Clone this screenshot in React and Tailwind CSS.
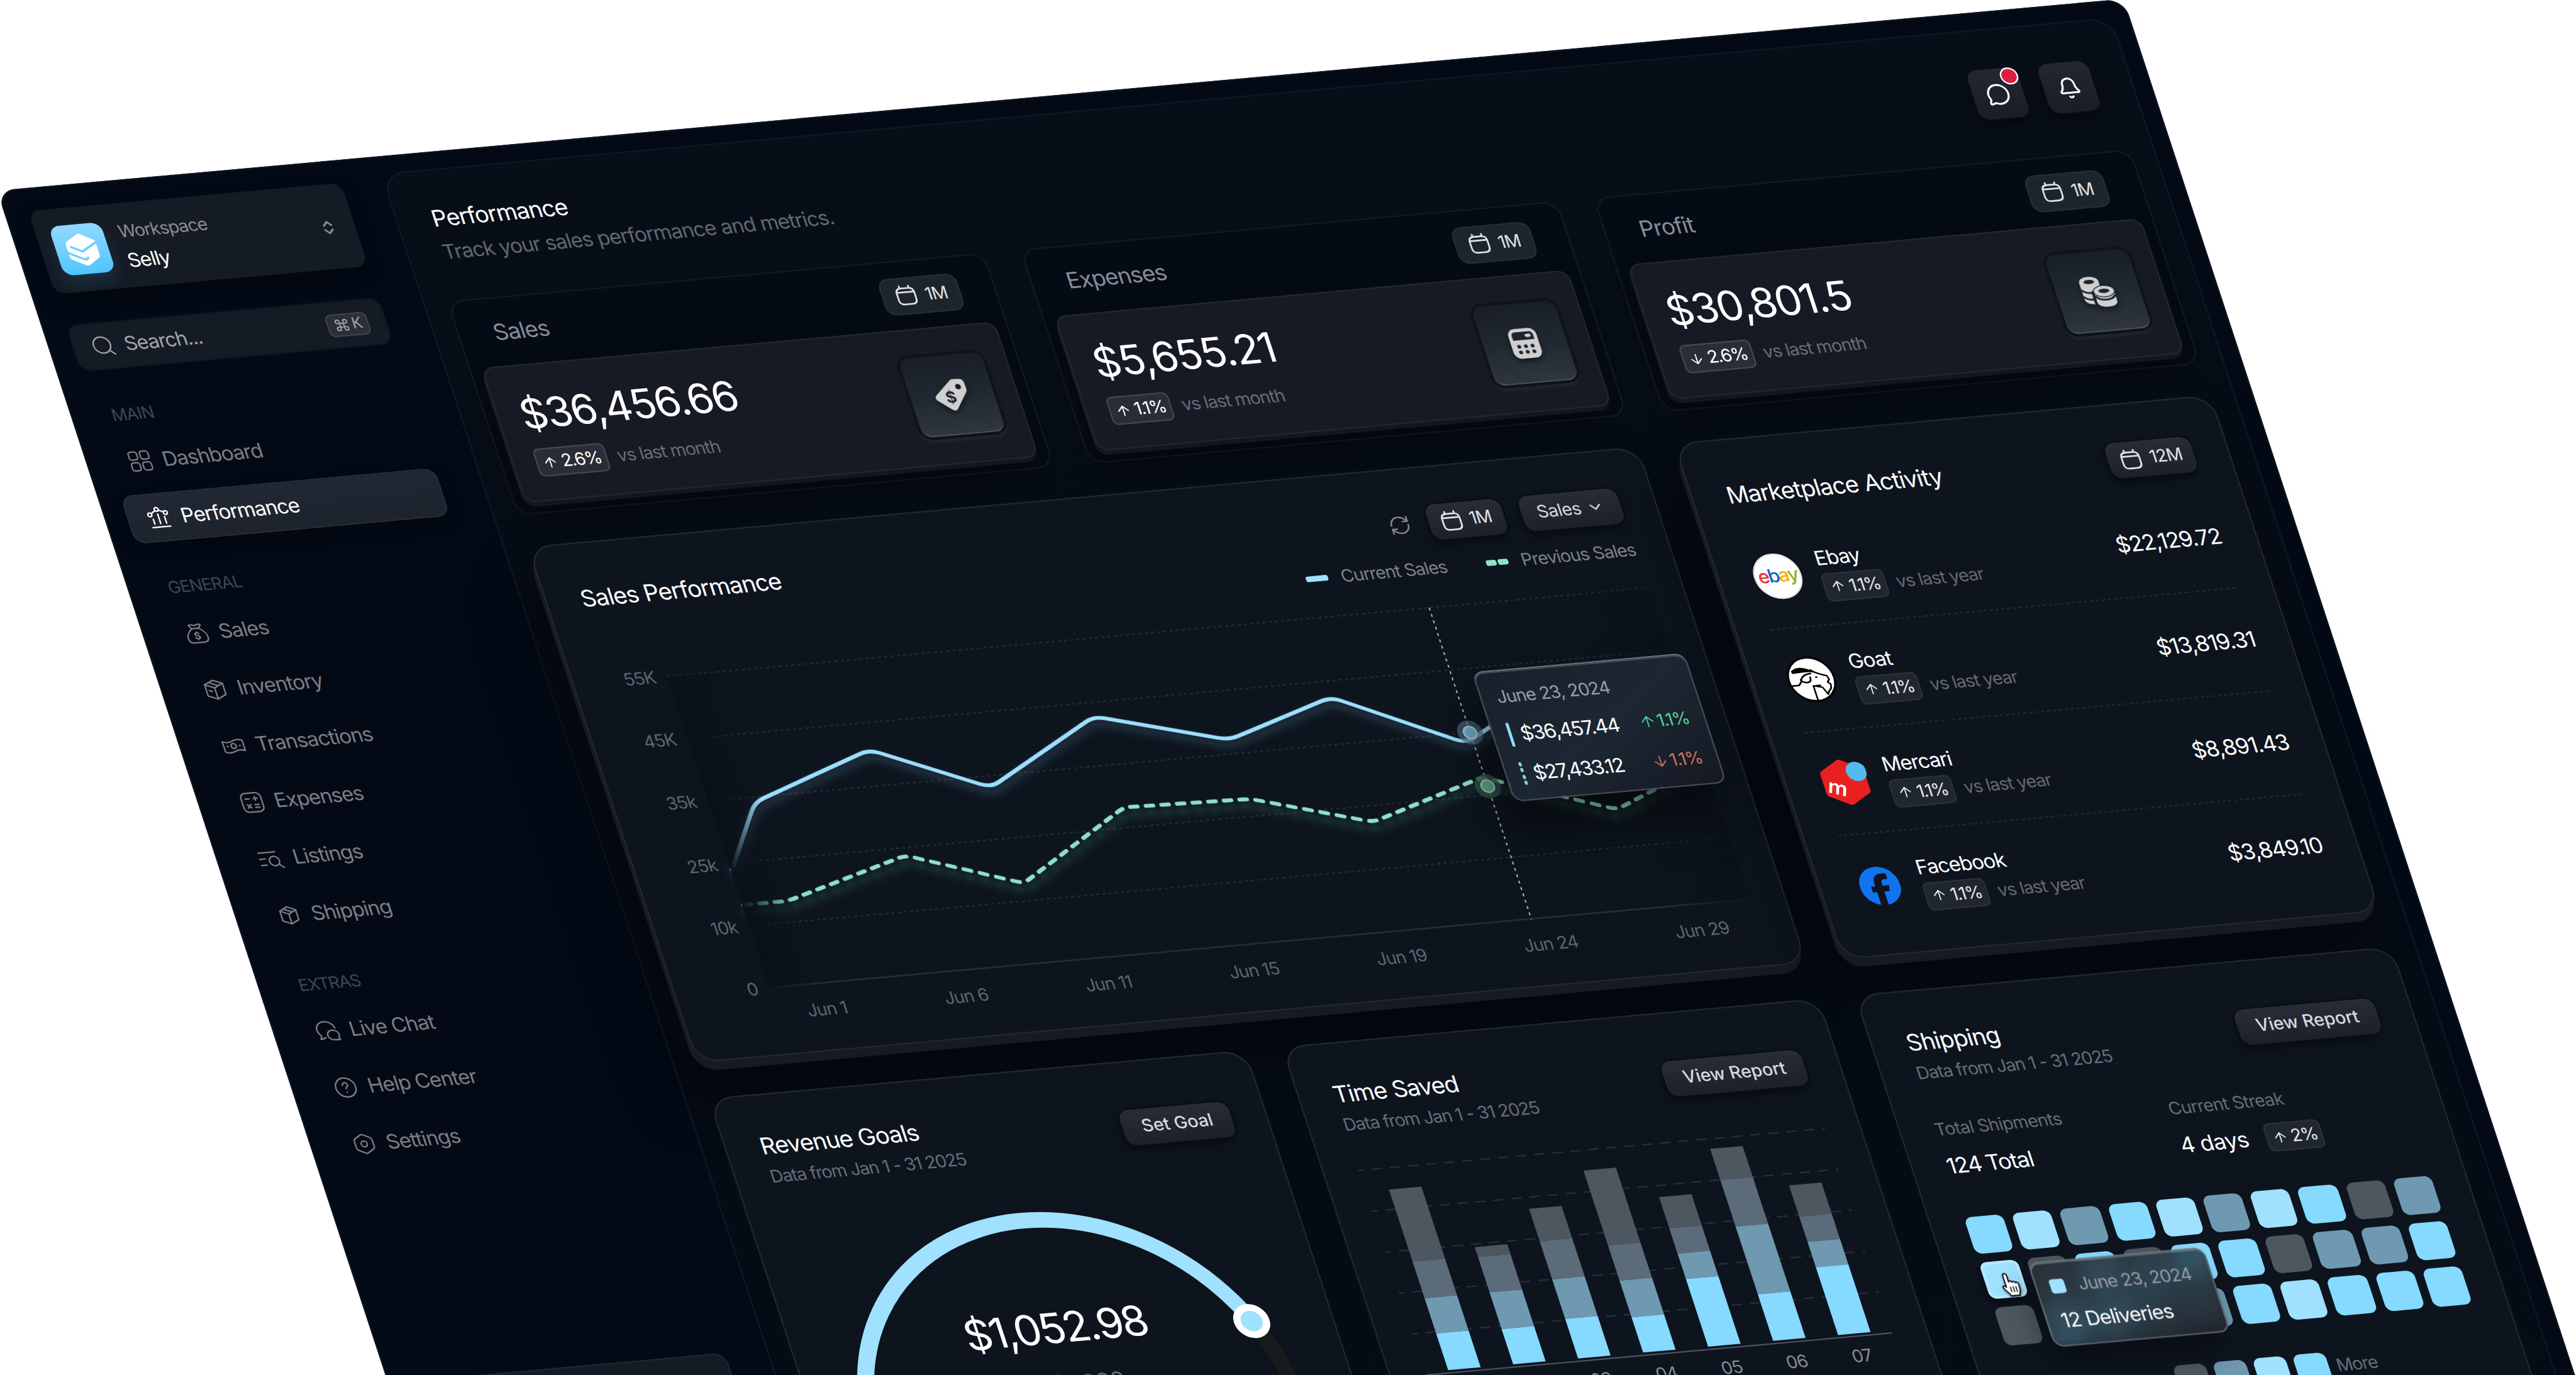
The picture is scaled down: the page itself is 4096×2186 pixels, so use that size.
import {
  ArrowDown,
  ArrowUp,
  Bell,
  ChevronDown,
  ChevronsUpDown,
  Command,
  MessageCircle,
  RefreshCw,
  Search,
} from "lucide-react";
import { FaFacebook } from "react-icons/fa6";

/* ---------- icons ---------- */

function Line({ children, className = "size-4", strokeWidth = 1.5 }) {
  return (
    <svg
      viewBox="0 0 24 24"
      fill="none"
      stroke="currentColor"
      strokeWidth={strokeWidth}
      strokeLinecap="round"
      strokeLinejoin="round"
      className={className}
    >
      {children}
    </svg>
  );
}

const DashboardIcon = () => (
  <Line>
    <rect x="2" y="2" width="8.5" height="8.5" rx="2.5" />
    <rect x="13.5" y="2" width="8.5" height="8.5" rx="2.5" />
    <rect x="2" y="13.5" width="8.5" height="8.5" rx="2.5" />
    <rect x="13.5" y="13.5" width="8.5" height="8.5" rx="2.5" />
  </Line>
);

const PerformanceIcon = () => (
  <Line>
    <path d="M3 22h18M6 18.5v-5M12 18.5v-10M18 18.5v-7" />
    <circle cx="4" cy="8.5" r="2" />
    <circle cx="12" cy="3.5" r="2" />
    <circle cx="20" cy="7.5" r="2" />
    <path d="m5.7 7.4 4.6-2.8M13.9 4.5l4.2 2" />
  </Line>
);

const MoneyBagIcon = () => (
  <Line>
    <path d="M8.5 7C5 9.5 2 13.5 2 17c0 3.5 2 5 5.5 5h9c3.5 0 5.5-1.5 5.5-5 0-3.5-3-7.5-6.5-10Z" />
    <path d="M8.5 7 6 3.5c1.5-1 2.7-.9 4-.2 1.3.6 2.7.6 4 0 1.3-.7 2.5-.8 4 .2L15.5 7" />
    <path d="M14 12.8c-.4-.8-1.1-1.1-2-1.1-1.2 0-2 .6-2 1.5 0 2 4.2 1 4.2 3.1 0 1-.9 1.6-2.2 1.6-1 0-1.900-.4-2.200-1.300M12 10.800v.9M12 17.900v.9" />
  </Line>
);

const InventoryIcon = () => (
  <Line>
    <path d="M12 2.2 3 6v12l9 4 9-4V6l-9-3.800Z" />
    <path d="m3 6 9 4.200L21 6M12 10.200V22M7.500 4.200l9 4.100M6 12.500l2.500 1.200" />
  </Line>
);

const TransactionsIcon = () => (
  <Line>
    <path d="M2 6.500c3.300 1.700 6.700 1.700 10 .2 3.300-1.600 6.700-1.600 10 0v11c-3.300-1.600-6.700-1.600-10 0-3.300 1.500-6.700 1.500-10-.2v-11Z" />
    <circle cx="12" cy="12" r="2.6" />
    <path d="M5.500 12h.8M17.700 12h.8" />
  </Line>
);

const ExpensesIcon = () => (
  <Line>
    <rect x="2" y="2" width="20" height="20" rx="5" />
    <path d="M6 8h4M14 8h4M16 6v4M6.500 14l3.500 3.500M10 14l-3.500 3.500M14 14.500h4M14 17.500h4" />
  </Line>
);

const ListingsIcon = () => (
  <Line>
    <path d="M1 5h17M1 11.500h5.500M1 18h5.500" />
    <circle cx="15" cy="14.5" r="5" />
    <path d="m18.700 18.200 4 3.800" />
  </Line>
);

const ShippingIcon = () => (
  <Line>
    <path d="M12 3 4 6.800v10.400L12 21l8-3.800V6.800L12 3Z" />
    <path d="m4 6.800 8 3.900 8-3.900M12 10.700V21M8 5l8 3.800" />
  </Line>
);

const LiveChatIcon = () => (
  <Line>
    <path d="M20.500 9.500C19.800 5.300 16 2 11 2 5.800 2 2 5.700 2 10.200c0 2.300 1 4.300 2.500 5.800.3 1.400-.2 2.800-1.300 4 2 .2 3.800-.3 5.300-1.300" />
    <path d="M16.500 11.500c-3 0-5.300 2.200-5.300 5s2.300 5 5.300 5c2 .3 4 .5 6 .3-.8-.8-1-1.600-.8-2.400.6-.8 1-1.800 1-2.900 0-2.800-2.800-5-6.200-5Z" />
  </Line>
);

const HelpIcon = () => (
  <Line>
    <circle cx="12" cy="12" r="10" />
    <path d="M9.500 9.500C9.500 8 10.600 7 12 7s2.500 1 2.500 2.300c0 2-2.500 2-2.500 4.200M12 16.800v.1" />
  </Line>
);

const SettingsIcon = () => (
  <Line>
    <path d="M10.500 2.500a3 3 0 0 1 3 0l6 3.400a3 3 0 0 1 1.500 2.600v7a3 3 0 0 1-1.500 2.600l-6 3.400a3 3 0 0 1-3 0l-6-3.400A3 3 0 0 1 3 15.500v-7a3 3 0 0 1 1.500-2.600Z" />
    <circle cx="12" cy="12" r="3" />
  </Line>
);

const CalendarIcon = () => (
  <Line className="size-[15px]" strokeWidth={1.9}>
    <path d="M2.500 9.500c0-4 2-5.500 5.500-5.500h8c3.500 0 5.500 1.500 5.500 5.500v7c0 4-2 5.500-5.500 5.500H8c-3.500 0-5.500-1.500-5.500-5.500v-7ZM7 4V1.500M17 4V1.500M2.800 8.500h18.400" />
  </Line>
);

const TagIcon = () => (
  <svg viewBox="0 0 24 24" className="size-6 drop-shadow-[0_2px_2px_rgba(0,0,0,0.5)]">
    <path
      fill="#cfcfcf"
      fillRule="evenodd"
      d="M13 2.200c1-.9 1.800-1.100 3-1.100l3.800.2c1.600.1 2.700 1.200 2.800 2.700l.2 4.200c0 1.300-.2 2-1.100 3l-8.500 10.500c-1.200 1.400-2.700 1.500-4 .3l-7.400-6.600c-1.400-1.300-1.400-2.700-.2-4L13 2.200Zm4.800 6.300a1.900 1.900 0 1 0 0-3.800 1.900 1.900 0 0 0 0 3.800Z"
    />
    <text x="10.8" y="17.5" textAnchor="middle" fill="#1d242d" fontSize="11" fontWeight="700">
      $
    </text>
  </svg>
);

const CalculatorIcon = () => (
  <svg viewBox="0 0 24 24" className="size-6 drop-shadow-[0_2px_2px_rgba(0,0,0,0.5)]">
    <rect x="2.5" y="1.5" width="19" height="21" rx="5" fill="#cfcfcf" />
    <path d="M4.800 9.500V6.600c0-2 1-2.800 2.800-2.800h8.800c1.800 0 2.800.8 2.800 2.800v2.900Z" fill="#1d242d" />
    <rect x="13.5" y="5.5" width="4" height="2.2" rx="1" fill="#cfcfcf" />
    <g fill="#1d242d">
      <circle cx="7.5" cy="14" r="1.3" />
      <circle cx="12" cy="14" r="1.3" />
      <circle cx="16.5" cy="14" r="1.3" />
      <circle cx="7.5" cy="18" r="1.3" />
      <circle cx="12" cy="18" r="1.3" />
      <circle cx="16.5" cy="18" r="1.3" />
    </g>
  </svg>
);

const CoinsIcon = () => (
  <svg viewBox="0 0 24 24" className="size-6 drop-shadow-[0_2px_2px_rgba(0,0,0,0.5)]">
    <g fill="#cfcfcf">
      <path d="M1.500 5v11.500c0 2.200 2.300 3.800 6 4V5Z" />
      <path d="M1.500 5v3.500c0 1.800 3 3 6.500 3s6.500-1.200 6.500-3V5Z" />
      <ellipse cx="8" cy="4.8" rx="6.5" ry="3.6" />
    </g>
    <g fill="none" stroke="#1d242d" strokeWidth="1.3">
      <path d="M1.500 10c1 1.800 3.500 2.600 6.500 2.600M1.500 14.600c1 1.800 3.500 2.600 6.500 2.600" />
      <path d="M8.600 11.200V22" />
    </g>
    <ellipse cx="8" cy="4.8" rx="3.6" ry="1.5" fill="#1d242d" />
    <path d="M9.300 12v7.500c0 2 2.800 3.500 6.700 3.500s6.700-1.500 6.700-3.500V12Z" fill="#cfcfcf" />
    <ellipse cx="16" cy="12" rx="7.3" ry="4.3" fill="#1d242d" />
    <ellipse cx="16" cy="12" rx="6.7" ry="3.7" fill="#cfcfcf" />
    <ellipse cx="16" cy="11.8" rx="3.7" ry="1.5" fill="#1d242d" />
    <path d="M9.300 15c1.200 2 3.700 3 6.700 3s5.500-1 6.700-3" fill="none" stroke="#1d242d" strokeWidth="1.3" />
  </svg>
);

const SellyLogo = () => (
  <svg viewBox="0 0 22 24" className="h-[24px] w-[22px]">
    <path
      d="M10 1Q11 .3 12 1l8 4.800q.8.500.8 1.500v9.500q0 1-.8 1.500l-8 4.800q-1 .5-2 0l-8.300-4.900q-1-.6-1-1.800V7q0-.9.900-1.500Z"
      fill="#fff"
    />
    <path
      d="M22 7 10.300 13.200 3.600 9.400M-1 11.800l2 1.900 8.800 4.900q1.700.8 2.900-.9"
      fill="none"
      stroke="#6dcdff"
      strokeWidth="1.5"
      strokeLinejoin="round"
      strokeLinecap="round"
    />
  </svg>
);

const EbayLogo = () => (
  <div className="flex size-8 items-center justify-center rounded-full border border-[#dfe1e6] bg-white text-[13px] font-medium tracking-[-0.08em]">
    <span className="text-[#e53238]">e</span>
    <span className="text-[#0064d2]">b</span>
    <span className="text-[#f5af02]">a</span>
    <span className="text-[#86b817]">y</span>
  </div>
);

const GoatLogo = () => (
  <svg viewBox="0 0 32 32" className="size-8">
    <circle cx="16" cy="16" r="15.3" fill="#fff" stroke="#000" strokeWidth="1.4" />
    <path d="M4 9.500C8 5.800 15 7 19.500 11.800 15 10 9.500 11.300 4.500 11.200Z" fill="#000" />
    <g fill="none" stroke="#000" strokeWidth="1.1" strokeLinejoin="round" strokeLinecap="round">
      <path d="M17 9.500c3 2.700 6.500 4 9.800 5l.8 2.500-1.600 2 1.600 1.500-.5 2.700-2 2-1.300 2-2.300-5-5.300-1.500" />
      <path d="M16.500 12c-3 0-6 1.300-7.800 4 1.200 2 4.300 2.500 5.800 1.500 1.200-.9.800-2.200 1-3" />
      <path d="M1 19.500h5.500L9 16.800M15.800 20.700V31M17.500 20.700h3" />
      <path d="M19.300 14.800h.6" />
    </g>
  </svg>
);

const MercariLogo = () => (
  <svg viewBox="0 0 32 34" className="h-[34px] w-8">
    <path
      d="M14.800 1.300q1.200-.6 2.400 0l12.600 6.900q1 .6 1 1.800v14q0 1.200-1 1.800l-12.600 6.900q-1.200.6-2.400 0L2.200 25.800q-1-.6-1-1.800V10q0-1.200 1-1.800Z"
      fill="#ea2020"
    />
    <circle cx="25.5" cy="10.2" r="6.8" fill="#52bbef" />
    <text x="9" y="25" textAnchor="middle" fill="#fff" fontSize="14" fontWeight="600" transform="rotate(20 9 22)">
      m
    </text>
  </svg>
);

const FacebookLogo = () => (
  <div className="flex size-8 items-center justify-center">
    <FaFacebook className="size-[27px] text-[#1273f0]" />
  </div>
);

/* ---------- shared bits ---------- */

function Badge({ children, down, muted }) {
  const Arrow = down ? ArrowDown : ArrowUp;
  return (
    <span
      className={
        muted
          ? "flex h-5 items-center gap-[2px] rounded-[4px] border border-[#2b3139] bg-[#20262f] px-[3px] text-[12px] tracking-[-0.065em] text-[#e4e5e8]"
          : "flex h-5 items-center gap-[2px] rounded-[4px] border border-[#434751] bg-[#2a2d38] px-[3px] text-[12px] tracking-[-0.06em] text-white"
      }
    >
      <Arrow className="size-[11px]" strokeWidth={1.8} />
      {children}
    </span>
  );
}

function DateButton({ children, flat }) {
  return (
    <button
      className={
        flat
          ? "flex h-[26px] items-center gap-[5px] rounded-[7px] border border-[#262d35] bg-[#1c242c] px-2 text-[12px] text-[#e0e1e4]"
          : "flex h-[25px] items-center gap-[5px] rounded-[7px] bg-linear-to-b from-[#272c37] to-[#1b202b] px-2 text-[12px] text-[#e0e1e4] shadow-[0_0_0_1px_#080d16,-1px_3px_5px_rgba(0,0,0,0.5)]"
      }
    >
      <CalendarIcon />
      {children}
    </button>
  );
}

function ActionButton({ children }) {
  return (
    <button className="flex h-[25px] items-center rounded-[7px] bg-linear-to-b from-[#272c37] to-[#1b202b] px-[13px] text-[12px] font-medium tracking-[-0.005em] text-[#d6d7dc] shadow-[0_0_0_1px_#080d16,-1px_3px_5px_rgba(0,0,0,0.5)]">
      {children}
    </button>
  );
}

function CardHeader({ title, action }) {
  return (
    <div className="flex h-11 items-center justify-between">
      <div>
        <h3 className="text-[16px] leading-6 text-white">{title}</h3>
        <p className="text-[12px] leading-5 tracking-[-0.045em] text-[#676c76]">Data from Jan 1 - 31 2025</p>
      </div>
      <ActionButton>{action}</ActionButton>
    </div>
  );
}

/* ---------- sidebar ---------- */

const navGroups = [
  {
    title: "MAIN",
    items: [
      { label: "Dashboard", icon: DashboardIcon },
      { label: "Performance", icon: PerformanceIcon, active: true },
    ],
  },
  {
    title: "GENERAL",
    items: [
      { label: "Sales", icon: MoneyBagIcon },
      { label: "Inventory", icon: InventoryIcon },
      { label: "Transactions", icon: TransactionsIcon },
      { label: "Expenses", icon: ExpensesIcon },
      { label: "Listings", icon: ListingsIcon },
      { label: "Shipping", icon: ShippingIcon },
    ],
  },
  {
    title: "EXTRAS",
    items: [
      { label: "Live Chat", icon: LiveChatIcon },
      { label: "Help Center", icon: HelpIcon },
      { label: "Settings", icon: SettingsIcon },
    ],
  },
];

function NavItem({ label, icon: Icon, active }) {
  return (
    <a
      className={
        active
          ? "-ml-px flex h-[34px] items-center gap-[7px] rounded-[8px] border border-[#282e38] bg-linear-to-b from-[#222833] to-[#1d232d] px-3 text-[13.9px] text-white shadow-[0_4px_10px_rgba(0,0,0,0.4)]"
          : "flex h-[34px] items-center gap-[7px] px-3 text-[13.9px] text-[#7d7d80]"
      }
    >
      <Icon />
      {label}
    </a>
  );
}

function Sidebar() {
  return (
    <aside className="flex w-[256px] shrink-0 flex-col pt-4 pr-7 pl-4">
      <div className="flex h-[59px] items-center gap-[10px] rounded-[8px] bg-[#151b25] pr-3 pl-[10px] shadow-[-2px_6px_12px_rgba(0,0,0,0.35)]">
        <div className="flex size-[35px] items-center justify-center rounded-[7px] bg-linear-to-b from-[#90d8ff] to-[#4ec5ff] shadow-[0_6px_10px_rgba(78,197,255,0.12)]">
          <SellyLogo />
        </div>
        <div className="flex-1">
          <div className="text-[12px] leading-5 text-[#8b8b8e]">Workspace</div>
          <div className="text-[13.5px] leading-5 text-white">Selly</div>
        </div>
        <ChevronsUpDown className="size-3 text-[#8a8f98]" strokeWidth={2.5} />
      </div>

      <div className="mt-[22px] flex h-[33px] items-center gap-[6px] rounded-[8px] border border-[#111721] bg-[#151b25] px-[11px] text-[13.5px] text-[#a0a4ac]">
        <Search className="size-[17px]" strokeWidth={1.4} />
        <span className="flex-1">Search...</span>
        <kbd className="flex h-4 items-center gap-[2px] rounded-[4px] border border-[#3d434d] bg-[#2a2f3a] px-1 font-sans text-[11px]">
          <Command className="size-[10px]" strokeWidth={2} />K
        </kbd>
      </div>

      <div className="mt-6 flex flex-col gap-6">
        {navGroups.map((group) => (
          <div key={group.title}>
            <div className="mb-2 pl-[11px] text-[11.5px] leading-4 text-[#40464f]">{group.title}</div>
            <nav className="flex flex-col gap-[6px]">
              {group.items.map((item) => (
                <NavItem key={item.label} {...item} />
              ))}
            </nav>
          </div>
        ))}
      </div>

      <div className="mt-[149px] h-[59px] rounded-[8px] border border-[#20262f] bg-[#151b25]" />
    </aside>
  );
}

/* ---------- stat cards ---------- */

const stats = [
  { label: "Sales", value: "$36,456.66", change: "2.6%", icon: TagIcon },
  { label: "Expenses", value: "$5,655.21", change: "1.1%", icon: CalculatorIcon },
  { label: "Profit", value: "$30,801.5", change: "2.6%", down: true, icon: CoinsIcon },
];

function StatCard({ label, value, change, down, icon: Icon }) {
  return (
    <section className="h-[152px] rounded-[11px] border border-[#131a24] bg-[#050b15] px-[7px]">
      <div className="flex h-[47px] items-center justify-between pr-4 pl-4">
        <span className="text-[15.5px] text-[#878c96]">{label}</span>
        <DateButton flat>1M</DateButton>
      </div>
      <div className="flex h-24 items-center justify-between rounded-[8px] border border-[#212732] bg-[#171a25] px-[15px] shadow-[-1px_3px_0_#11161f,-4px_10px_16px_rgba(0,0,0,0.35)]">
        <div>
          <div className="text-[28.5px] leading-9 tracking-[-0.035em] text-white">{value}</div>
          <div className="mt-[6px] flex items-center gap-[7px] text-[12px] text-[#676c76]">
            <Badge down={down}>{change}</Badge>
            vs last month
          </div>
        </div>
        <div className="flex size-14 items-center justify-center rounded-[7px] border-b border-[#4a5057] bg-linear-to-b from-[#191e27] via-[#1f2830] to-[#2f363d] shadow-[0_0_0_2px_#0f131b,0_3px_2px_1px_rgba(50,48,46,0.5)]">
          <Icon />
        </div>
      </div>
    </section>
  );
}

/* ---------- sales performance ---------- */

const currentSales = [
  [1, 137],
  [30.5, 92],
  [117, 63],
  [189, 96.5],
  [272, 54],
  [356, 78.5],
  [432, 55.5],
  [511, 95.5],
  [560, 71],
  [664, 92],
];

const previousSales = [
  [1, 162],
  [31, 162],
  [118, 138],
  [190, 164.5],
  [272, 118.5],
  [357, 120.5],
  [433, 144],
  [514, 120],
  [596, 150.5],
  [664, 124],
];

// polyline whose corners are softened by r
function softPath(points, r) {
  let d = `M${points[0][0]} ${points[0][1]}`;
  for (let i = 1; i < points.length - 1; i++) {
    const [px, py] = points[i - 1];
    const [x, y] = points[i];
    const [nx, ny] = points[i + 1];
    const a = Math.hypot(x - px, y - py);
    const b = Math.hypot(nx - x, ny - y);
    d += `L${x - ((x - px) / a) * r} ${y - ((y - py) / a) * r}`;
    d += `Q${x} ${y} ${x + ((nx - x) / b) * r} ${y + ((ny - y) / b) * r}`;
  }
  const last = points[points.length - 1];
  return `${d}L${last[0]} ${last[1]}`;
}

const yLabels = ["55K", "45K", "35k", "25k", "10k", "0"];
const xLabels = ["Jun 1", "Jun 6", "Jun 11", "Jun 15", "Jun 19", "Jun 24", "Jun 29"];

function ChartTooltip() {
  return (
    <div className="absolute top-[48px] left-[530px] h-[91px] w-36 rounded-[7px] border border-[#444a52] bg-linear-to-br from-[#17202a] via-[#1d2733] to-[#151923] px-[10px] pt-[7px] shadow-[0_-1px_0_#6b7178,-10px_20px_30px_rgba(0,0,0,0.5)]">
      <div className="text-[12px] leading-5 text-[#989da6]">June 23, 2024</div>
      <div className="mt-[6px] flex h-5 items-center">
        <span className="h-[17px] w-[2px] rounded-full bg-[#8fdcff]" />
        <span className="ml-[6px] flex-1 text-[13.5px] tracking-[-0.05em] text-white">$36,457.44</span>
        <span className="flex items-center text-[12px] tracking-[-0.05em] text-[#57cf9b]">
          <ArrowUp className="size-3" strokeWidth={1.6} />
          1.1%
        </span>
      </div>
      <div className="mt-2 flex h-5 items-center">
        <span className="flex h-[17px] w-[2px] flex-col justify-between">
          <i className="h-[3px] rounded-full bg-[#7fe0bf]" />
          <i className="h-[3px] rounded-full bg-[#7fe0bf]" />
          <i className="h-[3px] rounded-full bg-[#7fe0bf]" />
          <i className="h-[3px] rounded-full bg-[#7fe0bf]" />
        </span>
        <span className="ml-[6px] flex-1 text-[13.5px] tracking-[-0.055em] text-white">$27,433.12</span>
        <span className="flex items-center text-[12px] tracking-[-0.05em] text-[#cf6d62]">
          <ArrowDown className="size-3" strokeWidth={1.6} />
          1.1%
        </span>
      </div>
    </div>
  );
}

function SalesPerformance() {
  return (
    <section className="col-span-2 h-[366px] rounded-[16px] border border-[#212830] bg-[#0d141e] px-[23px] pt-[23px] shadow-[-2px_6px_0_#171a24,-14px_24px_40px_rgba(0,0,0,0.45)]">
      <div className="flex h-[30px] items-center justify-between">
        <h3 className="text-[16px] text-white">Sales Performance</h3>
        <div className="flex items-center gap-3">
          <RefreshCw className="size-[15px] text-[#85878c]" strokeWidth={1.7} />
          <DateButton>1M</DateButton>
          <button className="flex h-[25px] items-center gap-1 rounded-[7px] bg-linear-to-b from-[#272c37] to-[#1b202b] px-[11px] text-[12px] tracking-[-0.02em] text-[#d6d7dc] shadow-[0_0_0_1px_#080d16,-1px_3px_5px_rgba(0,0,0,0.5)]">
            Sales
            <ChevronDown className="size-3" strokeWidth={2} />
          </button>
        </div>
      </div>

      <div className="mt-[9px] flex h-4 items-center justify-end gap-[27px] text-[12px] tracking-[-0.035em] text-[#7f8186]">
        <span className="flex items-center gap-[9px]">
          <i className="h-[3.5px] w-[14.5px] rounded-[1.5px] bg-[#9fe0ff]" />
          Current Sales
        </span>
        <span className="flex items-center gap-[9px]">
          <span className="flex gap-[1.5px]">
            <i className="h-[3.5px] w-[6.5px] rounded-[1.5px] bg-[#8fe3c6]" />
            <i className="h-[3.5px] w-[6.5px] rounded-[1.5px] bg-[#8fe3c6]" />
          </span>
          Previous Sales
        </span>
      </div>

      <div className="mt-[13px] flex">
        <div className="flex h-[233px] w-8 flex-col justify-between text-right text-[12px] leading-3 text-[#5d636c]">
          {yLabels.map((label) => (
            <span key={label}>{label}</span>
          ))}
        </div>
        <div className="relative my-[6px] ml-2 h-[221px] w-[664px]">
          <svg viewBox="0 0 664 221" className="h-full w-full overflow-visible" fill="none">
            {[0, 44.2, 88.4, 132.6, 176.8].map((y) => (
              <path key={y} d={`M0 ${y}H664`} stroke="#252c35" strokeDasharray="2 2.2" />
            ))}
            <path d="M0 220.500H664" stroke="#252c35" strokeWidth="1.2" />
            <path d="M516 0V221" stroke="#aeb3b9" strokeWidth="0.9" strokeDasharray="2 2.5" />
            <path
              d={softPath(previousSales, 5)}
              stroke="#8fe0c5"
              strokeWidth="2.7"
              strokeDasharray="5 5.5"
              strokeLinecap="round"
              className="drop-shadow-[0_5px_3px_rgba(95,210,165,0.4)]"
            />
            <path
              d={softPath(currentSales, 7)}
              stroke="#9cdfff"
              strokeWidth="2.7"
              strokeLinecap="round"
              className="drop-shadow-[0_4px_3px_rgba(140,215,255,0.3)]"
            />
            <circle cx="516" cy="88.5" r="8.5" fill="#4c7188" fillOpacity="0.65" />
            <circle cx="516" cy="88.5" r="4.3" fill="#6daed2" stroke="#c0c6ca" strokeWidth="1.1" />
            <circle cx="516" cy="126.5" r="8.5" fill="#31564c" fillOpacity="0.8" />
            <circle cx="516" cy="126.5" r="4.3" fill="#5aa386" stroke="#aeb6b2" strokeWidth="1.1" />
          </svg>
          <div className="absolute inset-y-0 left-0 w-9 bg-linear-to-r from-[#0a1018] to-transparent" />
          <div className="absolute inset-y-0 right-0 w-14 bg-linear-to-l from-[#0b1119] to-transparent" />
          <ChartTooltip />
        </div>
      </div>

      <div className="mt-1 flex justify-between pr-[20px] pl-[60px] text-[12px] leading-4 text-[#5d636c]">
        {xLabels.map((label) => (
          <span key={label}>{label}</span>
        ))}
      </div>
    </section>
  );
}

/* ---------- marketplace ---------- */

const markets = [
  { name: "Ebay", amount: "$22,129.72", logo: EbayLogo },
  { name: "Goat", amount: "$13,819.31", logo: GoatLogo },
  { name: "Mercari", amount: "$8,891.43", logo: MercariLogo },
  { name: "Facebook", amount: "$3,849.10", logo: FacebookLogo },
];

function MarketplaceActivity() {
  return (
    <section className="h-[366px] rounded-[16px] border border-[#212830] bg-[#0d141e] px-[23px] pt-[23px] shadow-[-2px_6px_0_#171a24,-14px_24px_40px_rgba(0,0,0,0.45)]">
      <div className="flex h-[30px] items-center justify-between">
        <h3 className="text-[16px] text-white">Marketplace Activity</h3>
        <DateButton>12M</DateButton>
      </div>
      <div className="mt-[8px]">
        {markets.map(({ name, amount, logo: Logo }, i) => (
          <div key={name}>
            <div className="flex h-[72px] items-center gap-3">
              <Logo />
              <div className="flex-1">
                <div className="text-[13.8px] leading-5 text-white">{name}</div>
                <div className="mt-px flex items-center gap-[7px] text-[12px] text-[#66686d]">
                  <Badge muted>1.1%</Badge>
                  vs last year
                </div>
              </div>
              <span className="pt-px text-[15px] tracking-[-0.04em] text-white">{amount}</span>
            </div>
            {i < markets.length - 1 && (
              <svg className="block h-px w-full">
                <path d="M0 .5H316" stroke="#252c35" strokeDasharray="2 2" />
              </svg>
            )}
          </div>
        ))}
      </div>
    </section>
  );
}

/* ---------- bottom row ---------- */

function RevenueGoals() {
  return (
    <section className="h-[400px] rounded-[16px] border border-[#212830] bg-[#0d141e] px-[23px] pt-[23px]">
      <CardHeader title="Revenue Goals" action="Set Goal" />
      <div className="relative mt-5 h-[240px]">
        <svg viewBox="0 0 316 240" className="h-full w-full" fill="none">
          <path
            d="M285.400 98.200A143.500 143.500 0 0 1 299 159A143.500 143.500 0 0 1 290.300 208"
            stroke="#191a1c"
            strokeWidth="11"
          />
          <path
            d="M18.300 201A143.500 143.500 0 0 1 12 159A143.500 143.500 0 0 1 285.400 98.200"
            stroke="#a0e1ff"
            strokeWidth="11"
          />
          <circle cx="285.4" cy="99" r="9.6" fill="#a0e1ff" stroke="#fff" strokeWidth="4.8" />
        </svg>
        <div className="absolute inset-x-0 top-[72px] pr-[7px] text-center">
          <div className="text-[29px] leading-10 tracking-[-0.05em] text-white">$1,052.98</div>
          <div className="mt-[9px] pl-[3px] text-[16px] leading-5 text-[#676c76]">of $1,200</div>
        </div>
      </div>
    </section>
  );
}

// segment heights, top to bottom
const timeSaved = [
  { label: "01", parts: [51.6, 25.5, 25.5, 25.7] },
  { label: "02", parts: [7, 25.5, 25.5, 25.5] },
  { label: "03", parts: [22.2, 27.7, 28, 27.8] },
  { label: "04", parts: [52.2, 25.4, 25.5, 25.5] },
  { label: "05", parts: [22, 17.8, 18, 47.8] },
  { label: "06", parts: [22.2, 33.1, 47.6, 33] },
  { label: "07", parts: [22.2, 17.8, 17.8, 48.1] },
];

const partColors = ["bg-[#4d5760]", "bg-[#5c6b7a]", "bg-[#6f99b0]", "bg-[#86d9ff]"];

function TimeSaved() {
  return (
    <section className="h-[400px] rounded-[16px] border border-[#212830] bg-[#0d141e] px-[23px] pt-[23px]">
      <CardHeader title="Time Saved" action="View Report" />
      <div className="relative mt-[22px] h-[145px]">
        <svg viewBox="0 0 316 145" className="h-full w-full overflow-visible" fill="none">
          {[0, 28.9, 57.9, 86.9, 115.9].map((y) => (
            <path key={y} d={`M0 ${y}H316`} stroke="#272e37" strokeDasharray="7 5.2" strokeDashoffset="3" />
          ))}
          <path d="M0 145H316" stroke="#4a505b" />
        </svg>
        <div className="absolute inset-0 flex items-end justify-between pr-[14px] pb-[2px] pl-4">
          {timeSaved.map((bar) => (
            <div key={bar.label} className="w-[21.6px]">
              {bar.parts.map((height, i) => (
                <div key={i} className={partColors[i]} style={{ height }} />
              ))}
            </div>
          ))}
        </div>
      </div>
      <div className="mt-[6px] flex justify-between pr-[14px] pl-4 text-[12px] leading-4 text-[#858a93]">
        {timeSaved.map((bar) => (
          <span key={bar.label} className="w-[21.6px] text-center">
            {bar.label}
          </span>
        ))}
      </div>
    </section>
  );
}

const B = "bg-[#86d9ff]";
const L = "bg-[#a0e1ff]";
const M = "bg-[#6f99b0]";
const G = "bg-[#4d5760]";

const heatmap = [
  [B, L, M, B, L, M, L, B, G, M],
  [L, G, B, G, B, B, G, M, M, B],
  [G, B, M, G, M, B, L, B, B, B],
];

function HandCursor() {
  return (
    <svg viewBox="0 0 24 24" className="absolute top-[40px] left-[7px] size-[18px] drop-shadow-[0_1px_1px_rgba(0,0,0,0.4)]">
      <path
        d="M8 3.200c0-1 .8-1.700 1.700-1.700s1.700.8 1.700 1.700v6.300c.2-1.300 2.800-1.200 3 .5.400-1.100 2.600-.9 2.800.7.700-.8 2.400-.3 2.400 1.100v4.700c0 2.500-1.600 3.500-1.600 6H9.800c0-2.500-3.300-4.500-4.600-8-.5-1.300.9-2.400 2-1.300l.8.900V3.200Z"
        fill="#fff"
        stroke="#111"
        strokeWidth="1.2"
        strokeLinejoin="round"
      />
      <path d="M11.500 14v5M14 14v5M16.500 14v5" stroke="#111" strokeWidth="0.9" />
    </svg>
  );
}

function Shipping() {
  return (
    <section className="h-[400px] rounded-[16px] border border-[#212830] bg-[#0d141e] px-[23px] pt-[23px]">
      <CardHeader title="Shipping" action="View Report" />
      <div className="mt-[22px] grid grid-cols-2">
        <div>
          <div className="text-[12px] leading-4 tracking-[-0.03em] text-[#676c76]">Total Shipments</div>
          <div className="mt-2 text-[15px] leading-5 tracking-[-0.04em] text-white">124 Total</div>
        </div>
        <div>
          <div className="text-[12px] leading-4 tracking-[-0.03em] text-[#676c76]">Current Streak</div>
          <div className="mt-2 flex items-center gap-3 text-[15px] leading-5 tracking-[-0.02em] text-white">
            4 days
            <Badge muted>2%</Badge>
          </div>
        </div>
      </div>

      <div className="relative mt-[26px]">
        <div className="grid grid-cols-10 gap-[6px]">
          {heatmap.flat().map((tone, i) => (
            <div
              key={i}
              className={
                i === 10
                  ? "h-[26.2px] rounded-[5px] border-2 border-[#b6e8ff] bg-[#a0e1ff] shadow-[-1px_3px_6px_rgba(0,0,0,0.5)]"
                  : `h-[26.2px] rounded-[5px] ${tone}`
              }
            />
          ))}
        </div>
        <HandCursor />
        <div className="absolute top-[36px] left-[32px] h-[58.5px] w-[119px] rounded-[7px] border border-[#59636b] bg-linear-to-br from-[#262b33]/90 via-[#2b4450]/90 to-[#1f2028]/95 px-[9px] pt-[6px] shadow-[0_-1px_0_#70767c,-6px_12px_20px_rgba(0,0,0,0.35)] backdrop-blur-[6px]">
          <div className="flex items-center gap-[9px] text-[12px] leading-5 text-[#989da6]">
            <i className="size-[10px] rounded-[2px] bg-[#a0e1ff]" />
            June 23, 2024
          </div>
          <div className="mt-1 text-[13.7px] leading-5 tracking-[-0.035em] text-white">12 Deliveries</div>
        </div>
      </div>

      <div className="mt-6 flex items-center justify-center gap-[5.5px] text-[12px] leading-4 text-[#676c76]">
        Less
        <i className="size-[21.5px] rounded-[5px] bg-[#4d5760]" />
        <i className="size-[21.5px] rounded-[5px] bg-[#6f99b0]" />
        <i className="size-[21.5px] rounded-[5px] bg-[#a0e1ff]" />
        <i className="size-[21.5px] rounded-[5px] bg-[#86d9ff]" />
        More
      </div>
    </section>
  );
}

/* ---------- page ---------- */

function IconButton({ children }) {
  return (
    <button className="relative flex h-[35px] w-[34px] items-center justify-center rounded-[7px] bg-linear-to-b from-[#222732] to-[#181d27] text-white shadow-[0_0_0_1px_#080d16,-1px_4px_8px_rgba(0,0,0,0.5)]">
      {children}
    </button>
  );
}

export default function App() {
  return (
    <div className="h-[2186px] w-[4096px] overflow-hidden bg-white font-['Inter',sans-serif] tracking-[-0.03em]">
      <div className="flex h-[1120px] w-[1440px] origin-top-left [transform:matrix(2.3484,-0.2118,0.7359,2.2433,-5,303.1)] rounded-[12px] bg-[#030a16] shadow-[inset_0_0_0_1px_#0d1520]">
        <Sidebar />
        <main className="mt-3 mr-3 flex-1 rounded-[16px] border border-[#111823] bg-linear-to-b from-[#080e18] via-[#050b15] to-[#060c16] px-[15px] pt-[22px]">
          <header className="flex h-[45px] items-center justify-between pr-[10px] pl-2">
            <div>
              <h1 className="text-[15.8px] leading-6 text-white">Performance</h1>
              <p className="text-[14px] leading-[22px] text-[#60666f]">Track your sales performance and metrics.</p>
            </div>
            <div className="flex gap-[14px]">
              <IconButton>
                <MessageCircle className="size-4" strokeWidth={2} />
                <span className="absolute top-0 right-0 size-3 rounded-full border border-white bg-[#df1f41]" />
              </IconButton>
              <IconButton>
                <Bell className="size-4" strokeWidth={2} />
              </IconButton>
            </div>
          </header>

          <div className="mt-6 grid grid-cols-3 gap-x-6">
            {stats.map((stat) => (
              <StatCard key={stat.label} {...stat} />
            ))}
          </div>
          <div className="mt-[22px] grid grid-cols-3 gap-x-6">
            <SalesPerformance />
            <MarketplaceActivity />
          </div>
          <div className="mt-[25px] grid grid-cols-3 gap-x-6">
            <RevenueGoals />
            <TimeSaved />
            <Shipping />
          </div>
        </main>
      </div>
    </div>
  );
}
